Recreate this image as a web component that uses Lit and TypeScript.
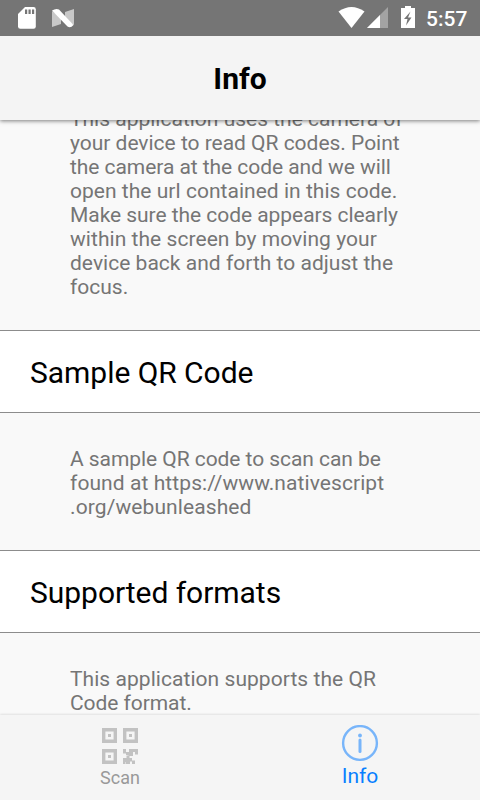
import { LitElement, html, css } from "lit";

type Line = [string, number?];

const about: Line[] = [
  ["This application uses the camera of"],
  ["your device to read QR codes. Point", -0.02],
  ["the camera at the code and we will", -0.06],
  ["open the url contained in this code.", 0.03],
  ["Make sure the code appears clearly", -0.05],
  ["within the screen by moving your", 0.05],
  ["device back and forth to adjust the", 0.02],
  ["focus."],
];
const sample: Line[] = [
  ["A sample QR code to scan can be", -0.06],
  ["found at https://www.nativescript", 0.08],
  [".org/webunleashed", 0.1],
];
const formats: Line[] = [
  ["This application supports the QR", 0.05],
  ["Code format.", -0.06],
];

class AppRoot extends LitElement {
  static styles = css`
    :host { display: flex; flex-direction: column; width: 480px; height: 800px; overflow: hidden; background: #f9f9f9; font-family: Roboto, sans-serif; color: #000; }
    .status { height: 36px; flex: none; background: #757575; display: flex; z-index: 2; }
    .status svg { display: block; }
    .clock { font-size: 21px; font-weight: 500; fill: #fff; }
    .bar { box-sizing: border-box; height: 84px; padding-top: 1px; flex: none; background: #f4f4f4; display: flex; align-items: center; justify-content: center; font-size: 30px; font-weight: 700; line-height: 36px; box-shadow: 0 1px 4px rgba(0,0,0,.5); z-index: 1; }
    .content { flex: 1; min-height: 0; overflow: hidden; }
    .text { box-sizing: border-box; color: #757575; font-size: 21px; line-height: 24px; padding: 34px 0 31px 70px; white-space: pre; }
    .first { margin-top: -47px; }
    .head { box-sizing: border-box; height: 83px; border: solid #8c8c8c; border-width: 1px 0; background: #fff; padding: 1px 0 0 30px; font-size: 30px; line-height: 82px; letter-spacing: -0.04px; }
    .tabs { height: 85px; flex: none; display: flex; background: #f5f5f5; box-shadow: 0 -1px 2px rgba(0,0,0,.1); z-index: 1; }
    .tab { flex: 1; display: flex; flex-direction: column; align-items: center; color: #999; font-size: 18px; line-height: 26px; padding-top: 10px; }
    .active { color: #087fff; font-size: 21px; line-height: 22px; }
    .tab svg { width: 40px; height: 40px; display: block; flex: none; }
  `;
  lines(list: Line[]) {
    return list.map(([text, spacing = 0]) => html`<div style="letter-spacing:${spacing}px">${text}</div>`);
  }
  render() {
    return html`
      <div class="status"><svg width="480" height="36" viewBox="0 0 480 36">
        <path fill="#fff" d="M25 7h8.500q2.300 0 2.300 2.300v17.200q0 2.300-2.300 2.300H20.300q-2.300 0-2.300-2.300V14z"/>
        <path fill="#757575" d="M25 9.500h2.200v4.500H25zM28.500 9.500h2.200v4.500h-2.200zM32 9.500h2.200v4.500H32z"/>
        <path fill="#c8c8c8" d="M52 11l9 6v7l-9 3zM74 9v16l-9-5v-8z"/>
        <path fill="#fff" d="M52 10.500q4-2.500 7-1l14.500 15.500q-3 3.500-6 1.500z"/>
        <path fill="#fff" d="M338.500 11.500q13-9 26 0L351.500 28z"/>
        <path fill="#a3a3a3" d="M388 7v21h-21z"/><path fill="#fff" d="M380 15v13h-13z"/>
        <path fill="#fff" d="M405 6h6v2h4v20h-14V8h4z"/>
        <path fill="#757575" d="M410.500 11.500l-6.500 7.500h3.500l-1.500 6.500 5.500-8H408z"/>
        <text class="clock" x="426" y="26">5:57</text>
      </svg></div>
      <div class="bar">Info</div>
      <div class="content">
        <div class="text first">${this.lines(about)}</div>
        <div class="head">Sample QR Code</div>
        <div class="text">${this.lines(sample)}</div>
        <div class="head">Supported formats</div>
        <div class="text">${this.lines(formats)}</div>
      </div>
      <div class="tabs">
        <div class="tab"><svg viewBox="0 0 40 40">
          <g fill="none" stroke="#c2c2c2" stroke-width="3.400">
            <path d="M3.700 4.700h11.600v11.600H3.700zM24.700 4.700h11.600v11.600H24.700zM3.700 25.700h11.600v11.600H3.700z"/>
          </g>
          <path fill="#c2c2c2" d="M8 9h3v3H8zM29 9h3v3h-3zM8 30h3v3H8z"/>
          <path fill="#c2c2c2" d="M23 24h3v3h3v-3h9v5.500h-3v-2.500h-2v4h-3.500v2H32v2.500h3V39h-3v-2.500h-2V39h-4v-2h-0.500V39H23v-6h3.500v-2.500h2V30H26v-1.500h-3z"/>
        </svg>Scan</div>
        <div class="tab active"><svg viewBox="0 0 40 40">
          <circle cx="20" cy="18" r="16.900" fill="none" stroke="#78b5fa" stroke-width="2.400"/>
          <circle cx="20" cy="10.500" r="1.900" fill="#78b5fa"/><path d="M20 15v11.500" stroke="#78b5fa" stroke-width="3" stroke-linecap="round"/>
        </svg>Info</div>
      </div>`;
  }
}
customElements.define("app-root", AppRoot);
